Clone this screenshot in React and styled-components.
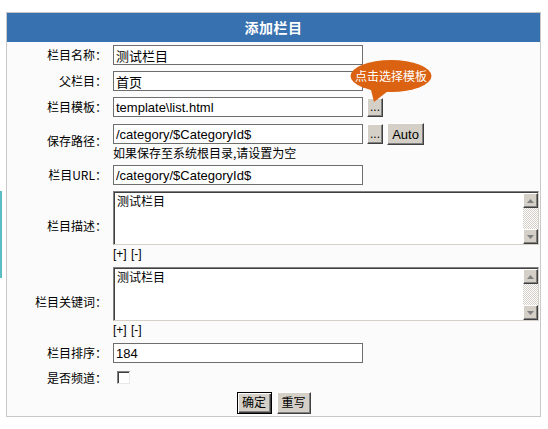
import React from "react";
import styled, { createGlobalStyle, css } from "styled-components";

const Global = createGlobalStyle`
  html, body { margin: 0; }
  body {
    padding: 12px 8px 0 6px;
    background: #fff linear-gradient(#5bbcc4, #5bbcc4) no-repeat 0 191px / 2px 87px;
    font-family: "Noto Sans CJK SC", "Liberation Sans", sans-serif;
    font-size: 12px;
    color: #000;
  }
`;

const Panel = styled.div`
  position: relative;
  width: 535px;
  box-sizing: border-box;
  border: 1px solid #c8c8c8;
  border-top-color: #c4c4c4;
  background: #fbfbfb;
  padding-bottom: 2px;
`;

const Title = styled.div`
  height: 29px;
  line-height: 29px;
  background: #3871b0;
  color: #fff;
  font-weight: bold;
  font-size: 14px;
  text-align: center;
  letter-spacing: 0.5px;
`;

const Form = styled.div`
  display: flex;
  flex-direction: column;
`;

const Row = styled.div`
  display: grid;
  grid-template-columns: 106px 1fr;
  align-items: center;
  padding: 3px 0;
`;

const Label = styled.div`
  text-align: right;
  padding-right: 6px;
  font-size: 12px;
  line-height: 14px;
  white-space: nowrap;
`;

const Field = styled.div`
  display: flex;
  flex-direction: column;
  align-items: flex-start;
`;

const Line = styled.div`
  display: flex;
  align-items: center;
  gap: 4px;
  height: ${p => p.$h || 20}px;
`;

const Input = styled.input`
  box-sizing: border-box;
  width: 250px;
  height: 20px;
  border: 1px solid #6e6e6e;
  background: #fff;
  padding: 0 2px;
  font-family: "Liberation Sans", "Noto Sans CJK SC", sans-serif;
  font-size: 13px;
  color: #000;
  outline: none;
`;

const raised = css`
  background: #d4d0c8;
  border: 1px solid;
  border-color: #fff #404040 #404040 #fff;
  box-shadow: inset -1px -1px 0 #808080;
  color: #000;
  padding: 0;
  cursor: default;
`;

const Btn = styled.button`
  ${raised};
  box-sizing: border-box;
  width: ${p => p.$w}px;
  height: ${p => p.$h}px;
  font-family: "Liberation Sans", "Noto Sans CJK SC", sans-serif;
  font-size: ${p => p.$fs || 12}px;
  line-height: 1;
  ${p => p.$primary && css`
    border-color: #000;
    box-shadow: inset 1px 1px 0 #fff, inset -1px -1px 0 #404040, inset -2px -2px 0 #808080;
  `}
`;

const Help = styled.div`
  margin-top: 1px;
  line-height: 13px;
  font-size: 12px;
`;

const TextBox = styled.div`
  box-sizing: border-box;
  width: 426px;
  height: 54px;
  display: flex;
  border: 1px solid;
  border-color: #808080 #d4d0c8 #d4d0c8 #808080;
  box-shadow: inset 1px 1px 0 #404040;
  background: #fff;
`;

const Area = styled.textarea`
  flex: 1;
  border: none;
  resize: none;
  outline: none;
  background: transparent;
  margin: 1px 0 0 1px;
  padding: 0 2px;
  font-family: "Noto Sans CJK SC", "Liberation Sans", sans-serif;
  font-size: 12px;
  line-height: 15px;
  color: #000;
`;

const Scroll = styled.div`
  width: 15px;
  display: flex;
  flex-direction: column;
  margin-top: 1px;
`;

const Arrow = styled.div`
  ${raised};
  box-sizing: border-box;
  height: 15px;
  display: flex;
  align-items: center;
  justify-content: center;
`;

const Track = styled.div`
  flex: 1;
  background: repeating-conic-gradient(#d4d0c8 0 25%, #fff 0 50%) 0 0 / 2px 2px;
`;

const Toggle = styled.div`
  margin-top: 2px;
  line-height: 14px;
  font-family: "Liberation Sans", sans-serif;
  font-size: 12px;
  word-spacing: 1px;
`;

const Check = styled.span`
  display: block;
  box-sizing: border-box;
  width: 13px;
  height: 13px;
  margin-left: 4px;
  background: #fff;
  border: 1px solid;
  border-color: #808080 #e8e8e8 #e8e8e8 #808080;
  box-shadow: inset 1px 1px 0 #404040;
`;

const Actions = styled.div`
  display: flex;
  justify-content: center;
  gap: 5px;
  padding: 3px 0 0;
`;

const Bubble = styled.div`
  position: absolute;
  left: 343px;
  top: 47px;
  width: 82px;
  height: 42px;
`;

const BubbleShape = styled.svg`
  position: absolute;
  inset: 0;
`;

const BubbleText = styled.span`
  position: relative;
  display: block;
  height: 33px;
  line-height: 31px;
  text-align: center;
  color: #fff;
  font-size: 12px;
`;

function ArrowIcon({ up }) {
  return (
    <svg width="7" height="4" viewBox="0 0 7 4">
      <path d={up ? "M3.5 0 L7 4 L0 4 Z" : "M0 0 L7 0 L3.5 4 Z"} fill="#808080" />
    </svg>
  );
}

function TextField({ value }) {
  return (
    <TextBox>
      <Area defaultValue={value} />
      <Scroll>
        <Arrow><ArrowIcon up /></Arrow>
        <Track />
        <Arrow><ArrowIcon /></Arrow>
      </Scroll>
    </TextBox>
  );
}

export default function App() {
  return (
    <>
      <Global />
      <Panel>
        <Title>添加栏目</Title>
        <Form>
          <Row>
            <Label>栏目名称：</Label>
            <Field><Input defaultValue="测试栏目" /></Field>
          </Row>
          <Row>
            <Label>父栏目：</Label>
            <Field><Input defaultValue="首页" /></Field>
          </Row>
          <Row>
            <Label>栏目模板：</Label>
            <Field>
              <Line>
                <Input defaultValue="template\list.html" />
                <Btn $w={16} $h={19}>...</Btn>
              </Line>
            </Field>
          </Row>
          <Row>
            <Label>保存路径：</Label>
            <Field>
              <Line $h={22}>
                <Input defaultValue="/category/$CategoryId$" />
                <Btn $w={16} $h={20}>...</Btn>
                <Btn $w={37} $h={22} $fs={13}>Auto</Btn>
              </Line>
              <Help>如果保存至系统根目录,请设置为空</Help>
            </Field>
          </Row>
          <Row>
            <Label>栏目URL：</Label>
            <Field><Input defaultValue="/category/$CategoryId$" /></Field>
          </Row>
          <Row>
            <Label>栏目描述：</Label>
            <Field>
              <TextField value="测试栏目" />
              <Toggle>[+] [-]</Toggle>
            </Field>
          </Row>
          <Row>
            <Label>栏目关键词：</Label>
            <Field>
              <TextField value="测试栏目" />
              <Toggle>[+] [-]</Toggle>
            </Field>
          </Row>
          <Row>
            <Label>栏目排序：</Label>
            <Field><Input defaultValue="184" /></Field>
          </Row>
          <Row>
            <Label>是否频道：</Label>
            <Field><Line $h={17}><Check /></Line></Field>
          </Row>
          <Actions>
            <Btn $w={35} $h={22} $fs={12} $primary>确定</Btn>
            <Btn $w={34} $h={22} $fs={12}>重写</Btn>
          </Actions>
        </Form>
        <Bubble>
          <BubbleShape width="82" height="42" viewBox="0 0 82 42">
            <path d="M20 26 L24 42 L38 31 Z" fill="#db6210" />
            <ellipse cx="41" cy="16" rx="40.5" ry="16" fill="#db6210" />
          </BubbleShape>
          <BubbleText>点击选择模板</BubbleText>
        </Bubble>
      </Panel>
    </>
  );
}
